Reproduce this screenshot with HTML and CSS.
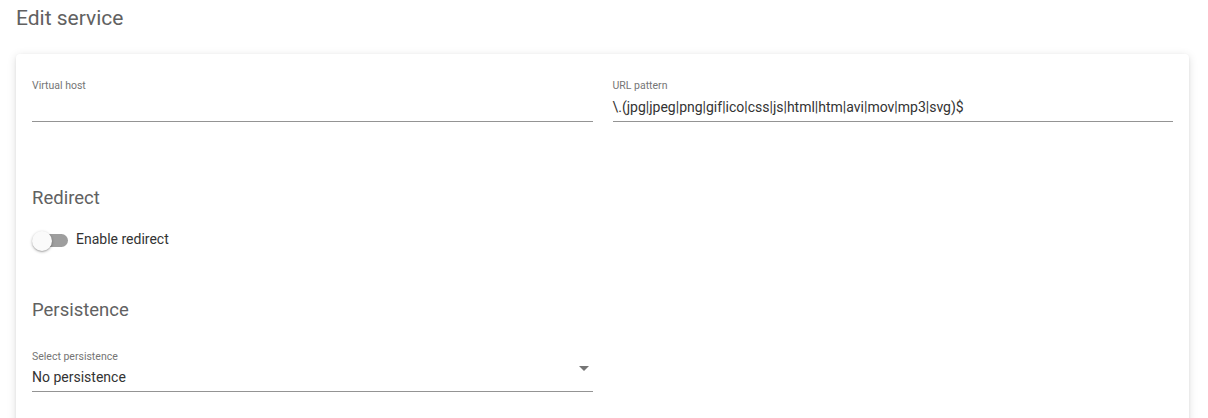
FILE: index.html
```html
<!DOCTYPE html>
<html lang="en">
<head>
<meta charset="utf-8">
<title>Edit service</title>
<link rel="stylesheet" href="styles.css">
</head>
<body>
<h1 class="page-title">Edit service</h1>
<div class="card">
  <div class="row">
    <div class="field">
      <label class="field-label">Virtual host</label>
      <div class="field-value"></div>
    </div>
    <div class="field">
      <label class="field-label">URL pattern</label>
      <div class="field-value">\.(jpg|jpeg|png|gif|ico|css|js|html|htm|avi|mov|mp3|svg)$</div>
    </div>
  </div>

  <h2 class="section-title redirect-title">Redirect</h2>
  <div class="toggle-row">
    <span class="toggle"><span class="toggle-track"></span><span class="toggle-knob"></span></span>
    <span class="toggle-label">Enable redirect</span>
  </div>

  <h2 class="section-title persistence-title">Persistence</h2>
  <div class="row">
    <div class="field select-field">
      <label class="field-label">Select persistence</label>
      <div class="field-value">No persistence</div>
      <span class="select-arrow"></span>
    </div>
    <div></div>
  </div>
</div>
</body>
</html>
```

FILE: styles.css
```css
html, body {
  margin: 0;
  padding: 0;
  background: #ffffff;
}
body {
  font-family: Roboto, "Liberation Sans", Arial, sans-serif;
  padding: 6px 19px 0 16px;
  color: rgba(0, 0, 0, 0.87);
}
.page-title {
  margin: 0 0 24px 0;
  font-size: 21px;
  line-height: 24px;
  font-weight: 400;
  color: #616161;
}
.card {
  background: #fff;
  border-radius: 4px;
  box-shadow: 0 2px 10px rgba(0, 0, 0, 0.13), 0 1px 3px rgba(0, 0, 0, 0.06);
  padding: 17px 16px 40px 16px;
  min-height: 400px;
}
.row {
  display: grid;
  grid-template-columns: 1fr 1fr;
  column-gap: 20px;
}
.field {
  position: relative;
  padding-top: 9px;
  border-bottom: 1px solid #949494;
}
.field-label {
  display: block;
  font-size: 10.5px;
  line-height: 12px;
  color: #757575;
}
.field-value {
  margin-top: 5px;
  font-size: 14px;
  line-height: 20px;
  height: 20px;
  padding-bottom: 4px;
  color: #333;
  white-space: nowrap;
}
.section-title {
  margin: 0;
  font-size: 18.5px;
  line-height: 24px;
  font-weight: 400;
  color: #616161;
}
.redirect-title {
  margin-top: 64px;
}
.toggle-row {
  display: flex;
  align-items: center;
  gap: 8px;
  margin-top: 19px;
  height: 20px;
}
.toggle {
  position: relative;
  width: 36px;
  height: 20px;
  display: inline-block;
}
.toggle-track {
  position: absolute;
  left: 2px;
  top: 5px;
  width: 34px;
  height: 13px;
  border-radius: 7px;
  background: #9e9e9e;
}
.toggle-knob {
  position: absolute;
  left: 0;
  top: 2px;
  width: 20px;
  height: 20px;
  border-radius: 50%;
  background: #fafafa;
  box-shadow: 0 1px 3px rgba(0, 0, 0, 0.3), 0 1px 1px rgba(0, 0, 0, 0.12);
}
.toggle-label {
  font-size: 14px;
  line-height: 20px;
  color: #333;
}
.persistence-title {
  margin-top: 49px;
}
.persistence-title + .row {
  margin-top: 20px;
}
.select-field .field-value {
  margin-top: 4px;
  padding-bottom: 4px;
}
.select-arrow {
  position: absolute;
  right: 4px;
  top: 24px;
  width: 0;
  height: 0;
  border-left: 5px solid transparent;
  border-right: 5px solid transparent;
  border-top: 5px solid #757575;
}
```
